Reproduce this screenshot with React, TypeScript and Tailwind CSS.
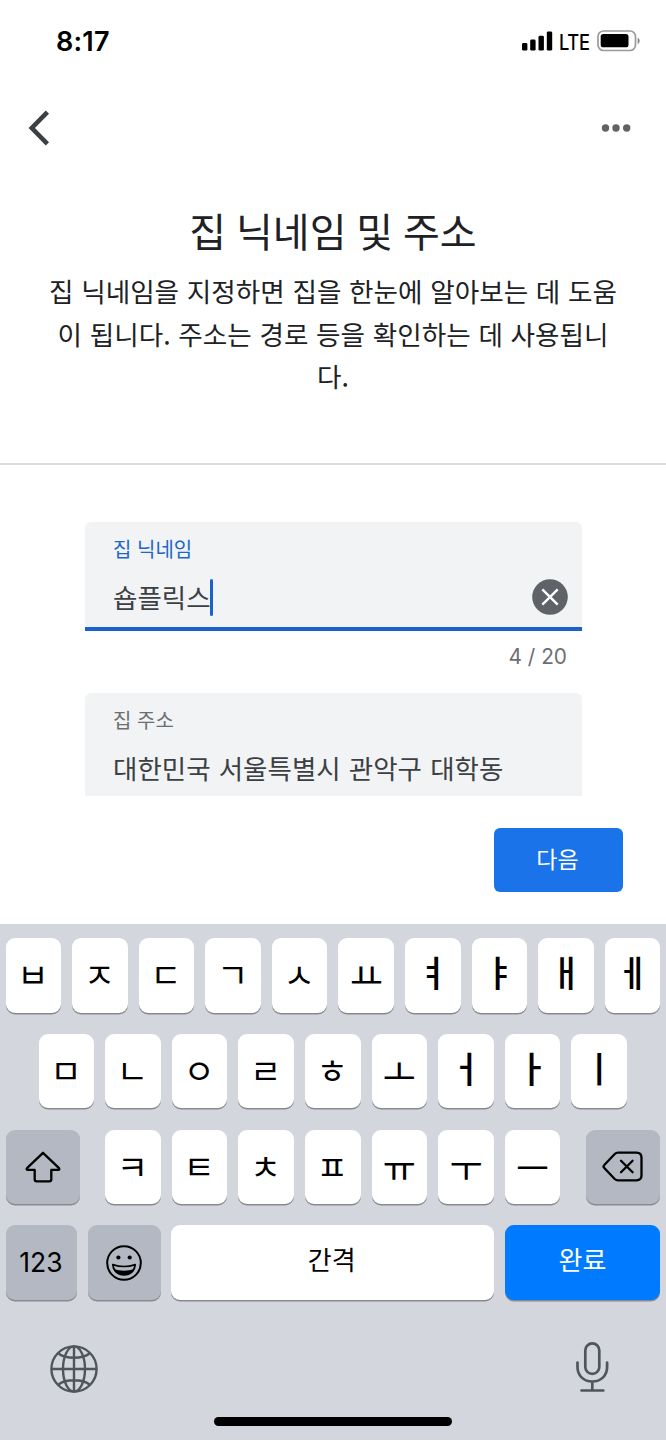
import type { ReactNode } from "react"
import clsx from "clsx"

const topRow = ["ㅂ", "ㅈ", "ㄷ", "ㄱ", "ㅅ", "ㅛ", "ㅕ", "ㅑ", "ㅐ", "ㅔ"]
const middleRow = ["ㅁ", "ㄴ", "ㅇ", "ㄹ", "ㅎ", "ㅗ", "ㅓ", "ㅏ", "ㅣ"]
const bottomRow = ["ㅋ", "ㅌ", "ㅊ", "ㅍ", "ㅠ", "ㅜ", "ㅡ"]

// upright vowels sit a little higher than the other letters
const tallVowels = ["ㅕ", "ㅑ", "ㅐ", "ㅔ", "ㅓ", "ㅏ", "ㅣ"]
const wideVowels = ["ㅛ", "ㅗ", "ㅠ", "ㅜ", "ㅡ"]

function letterClass(letter: string) {
  if (tallVowels.includes(letter)) return "pb-[8px] text-[36px] font-medium"
  if (wideVowels.includes(letter)) return "pb-[2px] text-[36px]"
  return "pr-px pb-[2px] text-[34px]"
}

interface KeyProps {
  children: ReactNode
  className?: string
}

function Key({ children, className = "w-[55.6px] bg-white" }: KeyProps) {
  return (
    <button
      className={clsx(
        "flex h-[74.5px] shrink-0 items-center justify-center rounded-[9px] text-black shadow-[0_1.5px_0_#898a8d]",
        className,
      )}
    >
      {children}
    </button>
  )
}

function LetterKeys({ letters }: { letters: string[] }) {
  return (
    <div className="flex gap-[11px]">
      {letters.map((letter) => (
        <Key key={letter}>
          <span className={clsx("leading-none", letterClass(letter))}>{letter}</span>
        </Key>
      ))}
    </div>
  )
}

function StatusBar() {
  return (
    <div className="flex h-[82px] items-center justify-between pr-[26px] pl-[56px] text-black">
      <span className="pt-[2px] font-[Inter] text-[27px] font-semibold tracking-[0.2px]">8:17</span>
      <div className="flex items-center">
        <svg width="31" height="20" viewBox="0 0 31 20">
          <rect x="0" y="12" width="5.4" height="7.6" rx="1.4" />
          <rect x="8.2" y="8.5" width="5.4" height="11.1" rx="1.4" />
          <rect x="16.5" y="4.8" width="5.4" height="14.8" rx="1.4" />
          <rect x="24.8" y="0.4" width="5.4" height="19.2" rx="1.4" />
        </svg>
        <span className="ml-[6px] w-[32px] origin-left scale-x-[0.87] pt-[2px] font-[Inter] text-[21px] leading-none font-medium tracking-[-0.3px]">
          LTE
        </span>
        <svg className="ml-[6px]" width="43" height="22" viewBox="0 0 43 22">
          <rect x="1" y="1" width="37.5" height="19.5" rx="5.5" fill="none" stroke="#9b9b9d" strokeWidth="1.7" />
          <rect x="3.7" y="4" width="27.8" height="13.3" rx="2.6" />
          <path d="M40.6 7.5c1.4.8 2.1 1.9 2.1 3.3s-.7 2.5-2.1 3.3z" fill="#8a8a8c" />
        </svg>
      </div>
    </div>
  )
}

function NavBar() {
  return (
    <div className="flex h-[92px] items-center justify-between pr-[35px] pl-[28px]">
      <svg width="22" height="36" viewBox="0 0 22 36" fill="none" stroke="#3c4043" strokeWidth="4.6">
        <path d="M19.4 2.2 3.8 18l15.6 15.8" />
      </svg>
      <svg width="30" height="8" viewBox="0 0 30 8" fill="#5f6368">
        <circle cx="4.5" cy="4" r="3.7" />
        <circle cx="15" cy="4" r="3.7" />
        <circle cx="25.7" cy="4" r="3.7" />
      </svg>
    </div>
  )
}

function Keyboard() {
  return (
    <div className="flex h-[516px] flex-col bg-[#d3d6dc] pt-[14px] pr-[6px] pl-[5.5px]">
      <div className="flex flex-col gap-[21.3px]">
        <LetterKeys letters={topRow} />
        <div className="flex justify-center">
          <LetterKeys letters={middleRow} />
        </div>
        <div className="flex justify-between">
          <Key className="w-[74px] bg-[#b3b8c2]">
            <svg width="36" height="32" viewBox="0 0 36 32" fill="none" stroke="currentColor" strokeWidth="2.3" strokeLinejoin="round">
              <path d="M18 1.8 34 17.2c.7.8.4 1.7-.7 1.7h-7v9.3c0 1.3-.8 2.1-2.1 2.1H11.8c-1.3 0-2.1-.8-2.1-2.1v-9.3h-7c-1.1 0-1.4-.9-.7-1.7z" />
            </svg>
          </Key>
          <LetterKeys letters={bottomRow} />
          <Key className="w-[74px] bg-[#b3b8c2]">
            <svg width="42" height="31" viewBox="0 0 42 31" fill="none" stroke="currentColor" strokeWidth="2.3" strokeLinecap="round" strokeLinejoin="round">
              <path d="M16 1.7h18.5c3.2 0 5 1.8 5 5v17.6c0 3.2-1.8 5-5 5H16c-1.4 0-2.3-.4-3.3-1.3L2.3 17c-1-1-1-2 0-3L12.7 3c1-.9 1.9-1.3 3.3-1.3z" />
              <path d="m19 9.7 11.6 11.6M30.6 9.7 19 21.3" />
            </svg>
          </Key>
        </div>
        <div className="flex">
          <Key className="w-[71px] bg-[#b3b8c2]">
            <span className="font-[Inter] text-[26.5px]">123</span>
          </Key>
          <Key className="ml-[11px] w-[73px] bg-[#b3b8c2]">
            <svg width="38" height="38" viewBox="0 0 38 38">
              <circle cx="19" cy="19" r="16.8" fill="none" stroke="currentColor" strokeWidth="2" />
              <circle cx="13.4" cy="13.5" r="2.1" />
              <circle cx="24.7" cy="13.5" r="2.1" />
              <path d="M7.8 20.6c7 2.4 15.4 2.4 22.4 0-.4 6.2-5 10.2-11.2 10.2S8.2 26.8 7.8 20.6z" fill="none" stroke="currentColor" strokeWidth="1.7" strokeLinejoin="round" />
              <path d="M9 25c6 2.2 14 2.2 20 0-1.6 3.9-5.4 6-10 6s-8.4-2.1-10-6z" />
            </svg>
          </Key>
          <Key className="ml-[10px] w-[323.5px] bg-white">
            <span className="pr-px pb-2 text-[26px]">간격</span>
          </Key>
          <Key className="ml-[11px] w-[155px] bg-[#007aff]">
            <span className="pb-2 text-[26px] text-white">완료</span>
          </Key>
        </div>
      </div>
      <div className="mt-[42px] flex items-start justify-between pr-[50px] pl-[44px]">
        <svg className="mt-[3px]" width="48" height="48" viewBox="0 0 48 48" fill="none" stroke="#50555c" strokeWidth="2.4">
          <circle cx="24" cy="24" r="22.6" />
          <ellipse cx="24" cy="24" rx="11" ry="22.6" />
          <path d="M24 1.4v45.2M1.4 24h45.2M8.5 8.5c7 5.6 24 5.6 31 0M8.5 39.5c7-5.6 24-5.6 31 0" />
        </svg>
        <svg width="34" height="50" viewBox="0 0 34 50" fill="none" stroke="#50555c" strokeWidth="2.7" strokeLinecap="round">
          <rect x="9.3" y="1.4" width="14" height="30.5" rx="7" />
          <path d="M1.5 20.5V25c0 9 6.5 14.5 14.8 14.5S31.1 34 31.1 25v-4.5M16.3 39.5v9M5.5 48.5h21.8" />
        </svg>
      </div>
      <div className="mt-auto mb-[14px] h-[9px] w-[238px] self-center rounded-full bg-black" />
    </div>
  )
}

export default function App() {
  return (
    <div
      lang="ko"
      className="flex h-[1440px] w-[666px] flex-col overflow-hidden bg-white font-['Noto_Sans_CJK_KR',sans-serif] text-[#202124]"
    >
      <StatusBar />
      <NavBar />

      <div className="h-[291px] shrink-0 border-b-2 border-[#dadce0] pt-[32px] text-center">
        <h1 className="text-[40px] leading-[48px] [word-spacing:-1.3px]">집 닉네임 및 주소</h1>
        <p className="mt-[16px] text-[26.6px] leading-[42.5px] [word-spacing:0.3px]">
          집 닉네임을 지정하면 집을 한눈에 알아보는 데 도움
          <br />
          이 됩니다. 주소는 경로 등을 확인하는 데 사용됩니
          <br />
          다.
        </p>
      </div>

      <div className="mt-[57px] h-[274px] shrink-0 overflow-hidden pr-[84px] pl-[85px]">
        <div className="h-[108.5px] rounded-t-[6px] border-b-4 border-[#1a62c7] bg-[#f1f3f4] pr-[14px] pl-[28px]">
          <div className="pt-[13px] text-[20px] leading-[28px] text-[#1f66c9]">집 닉네임</div>
          <div className="mt-[15px] flex items-center justify-between">
            <div className="flex items-center text-[26.5px] leading-[38px] text-[#3c4043]">
              숍플릭스
              <span className="-ml-px h-[37px] w-[3.5px] rounded-full bg-[#1a62c7]" />
            </div>
            <svg width="36" height="36" viewBox="0 0 36 36">
              <circle cx="18" cy="18" r="17.8" fill="#5f6368" />
              <path d="m10.3 10.3 15.4 15.4M25.7 10.3 10.3 25.7" stroke="#fff" strokeWidth="2.4" />
            </svg>
          </div>
        </div>
        <div className="h-[62.5px] pt-[12px] pr-[15px] text-right font-[Inter] text-[20.8px] leading-[28px] text-[#6b6f73]">
          4 / 20
        </div>
        <div className="h-[110px] rounded-t-[6px] bg-[#f1f3f4] pl-[28px]">
          <div className="pt-[13px] text-[20px] leading-[28px] text-[#6b6f73]">집 주소</div>
          <div className="mt-[15px] text-[26.5px] leading-[38px] text-[#3c4043] [word-spacing:0.8px]">
            대한민국 서울특별시 관악구 대학동
          </div>
        </div>
      </div>

      <div className="flex h-[128px] shrink-0 items-center justify-end pr-[43px]">
        <button className="flex h-[64px] w-[129px] items-center justify-center rounded-[6px] bg-[#1a73e8] pr-[2px] pb-[4px] text-[23px] text-white">
          다음
        </button>
      </div>

      <Keyboard />
    </div>
  )
}
